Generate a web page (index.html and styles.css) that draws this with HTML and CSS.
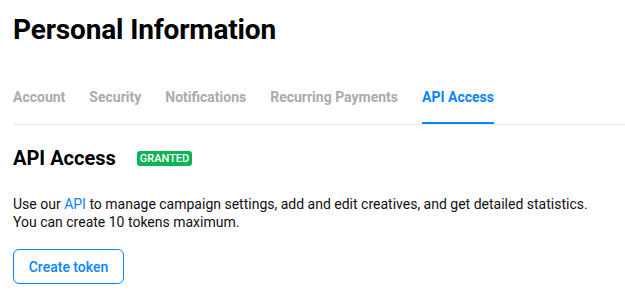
FILE: index.html
```html
<!DOCTYPE html>
<html>
<head>
<meta charset="utf-8">
<link rel="stylesheet" href="styles.css">
</head>
<body>
<div class="page">
  <h1 class="title">Personal Information</h1>
  <nav class="tabs">
    <a class="tab">Account</a>
    <a class="tab">Security</a>
    <a class="tab">Notifications</a>
    <a class="tab">Recurring Payments</a>
    <a class="tab active">API Access</a>
  </nav>
  <div class="section-head">
    <h2 class="section-title">API Access</h2>
    <span class="badge">GRANTED</span>
  </div>
  <p class="desc">Use our <a class="link">API</a> to manage campaign settings, add and edit creatives, and get detailed statistics.<br>You can create 10 tokens maximum.</p>
  <button class="btn">Create token</button>
</div>
</body>
</html>
```
FILE: styles.css
```css
* { box-sizing: border-box; }
html, body { margin: 0; padding: 0; background: #fff; }
body { font-family: Roboto, "Liberation Sans", sans-serif; color: #000; }
.page { padding: 13px 0 0 13px; }
.title { margin: 0; font-size: 28px; font-weight: 700; line-height: 34px; letter-spacing: -0.15px; }
.tabs { display: flex; align-items: stretch; gap: 24px; margin-top: 37px; border-bottom: 1px solid #ececec; height: 41px; }
.tab { font-size: 14px; font-weight: 700; color: #ababab; line-height: 18px; padding-top: 4px; }
.tab.active { color: #0a84ff; border-bottom: 2px solid #0a84ff; }
.section-head { display: flex; align-items: center; gap: 21px; margin-top: 21px; height: 24px; }
.section-title { margin: 0; font-size: 20px; font-weight: 700; line-height: 24px; }
.badge { background: #0db354; color: #fff; font-size: 11px; font-weight: 500; line-height: 15px; padding: 0 3px; border-radius: 3px; }
.desc { margin: 25px 0 0; font-size: 14px; line-height: 18px; color: #111; }
.link { color: #0a84ff; }
.btn { display: block; margin-top: 18px; width: 111px; height: 35px; border: 1px solid #0a84ff; border-radius: 6px; background: #fff; color: #0a84ff; font-family: Roboto, sans-serif; font-size: 14px; font-weight: 500; padding: 0; }
```
